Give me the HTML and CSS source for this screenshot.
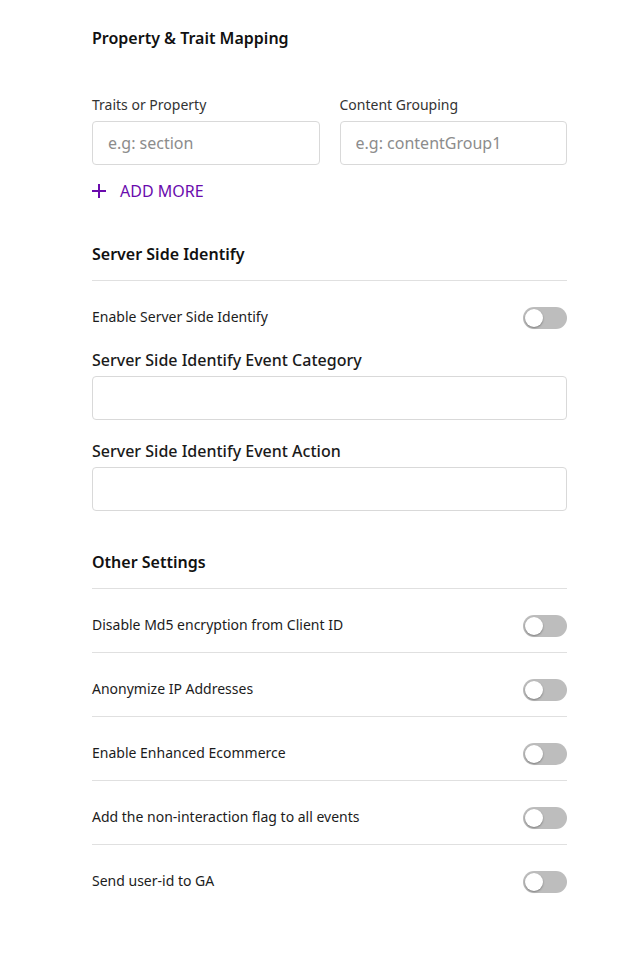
FILE: index.html
```html
<!DOCTYPE html>
<html>
<head>
<meta charset="utf-8">
<link rel="stylesheet" href="styles.css">
</head>
<body>
<main class="page">
  <h2 class="section-title first">Property &amp; Trait Mapping</h2>
  <div class="mapping-grid">
    <div class="field">
      <label class="small-label">Traits or Property</label>
      <input class="text-input" type="text" placeholder="e.g: section">
    </div>
    <div class="field">
      <label class="small-label">Content Grouping</label>
      <input class="text-input" type="text" placeholder="e.g: contentGroup1">
    </div>
  </div>
  <button class="add-more">
    <svg width="14" height="14" viewBox="0 0 14 14"><path d="M7 0v14M0 7h14" stroke="currentColor" stroke-width="2"/></svg>
    <span>ADD MORE</span>
  </button>

  <h2 class="section-title spaced">Server Side Identify</h2>
  <div class="divider"></div>
  <div class="toggle-row tight">
    <span class="row-label">Enable Server Side Identify</span>
    <span class="toggle"><span class="knob"></span></span>
  </div>
  <div class="field block">
    <label class="big-label">Server Side Identify Event Category</label>
    <input class="text-input" type="text">
  </div>
  <div class="field block">
    <label class="big-label">Server Side Identify Event Action</label>
    <input class="text-input" type="text">
  </div>

  <h2 class="section-title spaced">Other Settings</h2>
  <div class="divider"></div>
  <div class="toggle-row">
    <span class="row-label">Disable Md5 encryption from Client ID</span>
    <span class="toggle"><span class="knob"></span></span>
  </div>
  <div class="divider"></div>
  <div class="toggle-row">
    <span class="row-label">Anonymize IP Addresses</span>
    <span class="toggle"><span class="knob"></span></span>
  </div>
  <div class="divider"></div>
  <div class="toggle-row">
    <span class="row-label">Enable Enhanced Ecommerce</span>
    <span class="toggle"><span class="knob"></span></span>
  </div>
  <div class="divider"></div>
  <div class="toggle-row">
    <span class="row-label">Add the non-interaction flag to all events</span>
    <span class="toggle"><span class="knob"></span></span>
  </div>
  <div class="divider"></div>
  <div class="toggle-row">
    <span class="row-label">Send user-id to GA</span>
    <span class="toggle"><span class="knob"></span></span>
  </div>
</main>
</body>
</html>
```

FILE: styles.css
```css
* { box-sizing: border-box; }
html, body { margin: 0; padding: 0; background: #fff; }
body {
  font-family: "Noto Sans", "Open Sans", sans-serif;
  color: #1c1c1c;
}
.page {
  width: 475px;
  margin-left: 92px;
  padding-top: 26px;
  padding-bottom: 40px;
}
.section-title {
  margin: 0;
  font-size: 16px;
  line-height: 24px;
  font-weight: 600;
  color: #111;
}
.section-title.spaced { margin-top: 39px; }
.mapping-grid {
  margin-top: 45px;
  display: grid;
  grid-template-columns: 1fr 1fr;
  column-gap: 20px;
}
.field { display: flex; flex-direction: column; }
.small-label {
  font-size: 14px;
  line-height: 20px;
  color: #333;
  margin-bottom: 6px;
}
.big-label {
  font-size: 16px;
  line-height: 24px;
  font-weight: 500;
  color: #1a1a1a;
  margin-bottom: 4px;
}
.field.block { margin-top: 19px; }
.text-input {
  height: 44px;
  width: 100%;
  border: 1px solid #d9d9d9;
  border-radius: 4px;
  padding: 0 15px;
  font-family: inherit;
  font-size: 16px;
  color: #222;
  outline: none;
  background: #fff;
}
.text-input::placeholder { color: #8c8c8c; }
.add-more {
  margin-top: 14px;
  display: flex;
  align-items: center;
  gap: 14px;
  border: 0;
  background: none;
  padding: 0;
  font-family: inherit;
  font-size: 16px;
  line-height: 24px;
  color: #6a0bad;
  cursor: pointer;
}
.add-more svg { display: block; }
.divider {
  height: 1px;
  background: #e0e0e0;
}
.section-title + .divider { margin-top: 14px; }
.toggle-row {
  display: flex;
  align-items: center;
  justify-content: space-between;
  padding: 26px 0 15px;
}
.toggle-row.tight { padding-bottom: 0; }
.row-label {
  font-size: 14px;
  line-height: 20px;
  color: #1c1c1c;
  position: relative;
  top: -1px;
}
.toggle {
  width: 44px;
  height: 22px;
  border-radius: 11px;
  background: #bdbdbd;
  display: flex;
  align-items: center;
  padding-left: 2px;
  flex-shrink: 0;
}
.knob {
  width: 18px;
  height: 18px;
  border-radius: 50%;
  background: #fff;
  box-shadow: 0 1px 2px rgba(0,0,0,0.35);
}
```
